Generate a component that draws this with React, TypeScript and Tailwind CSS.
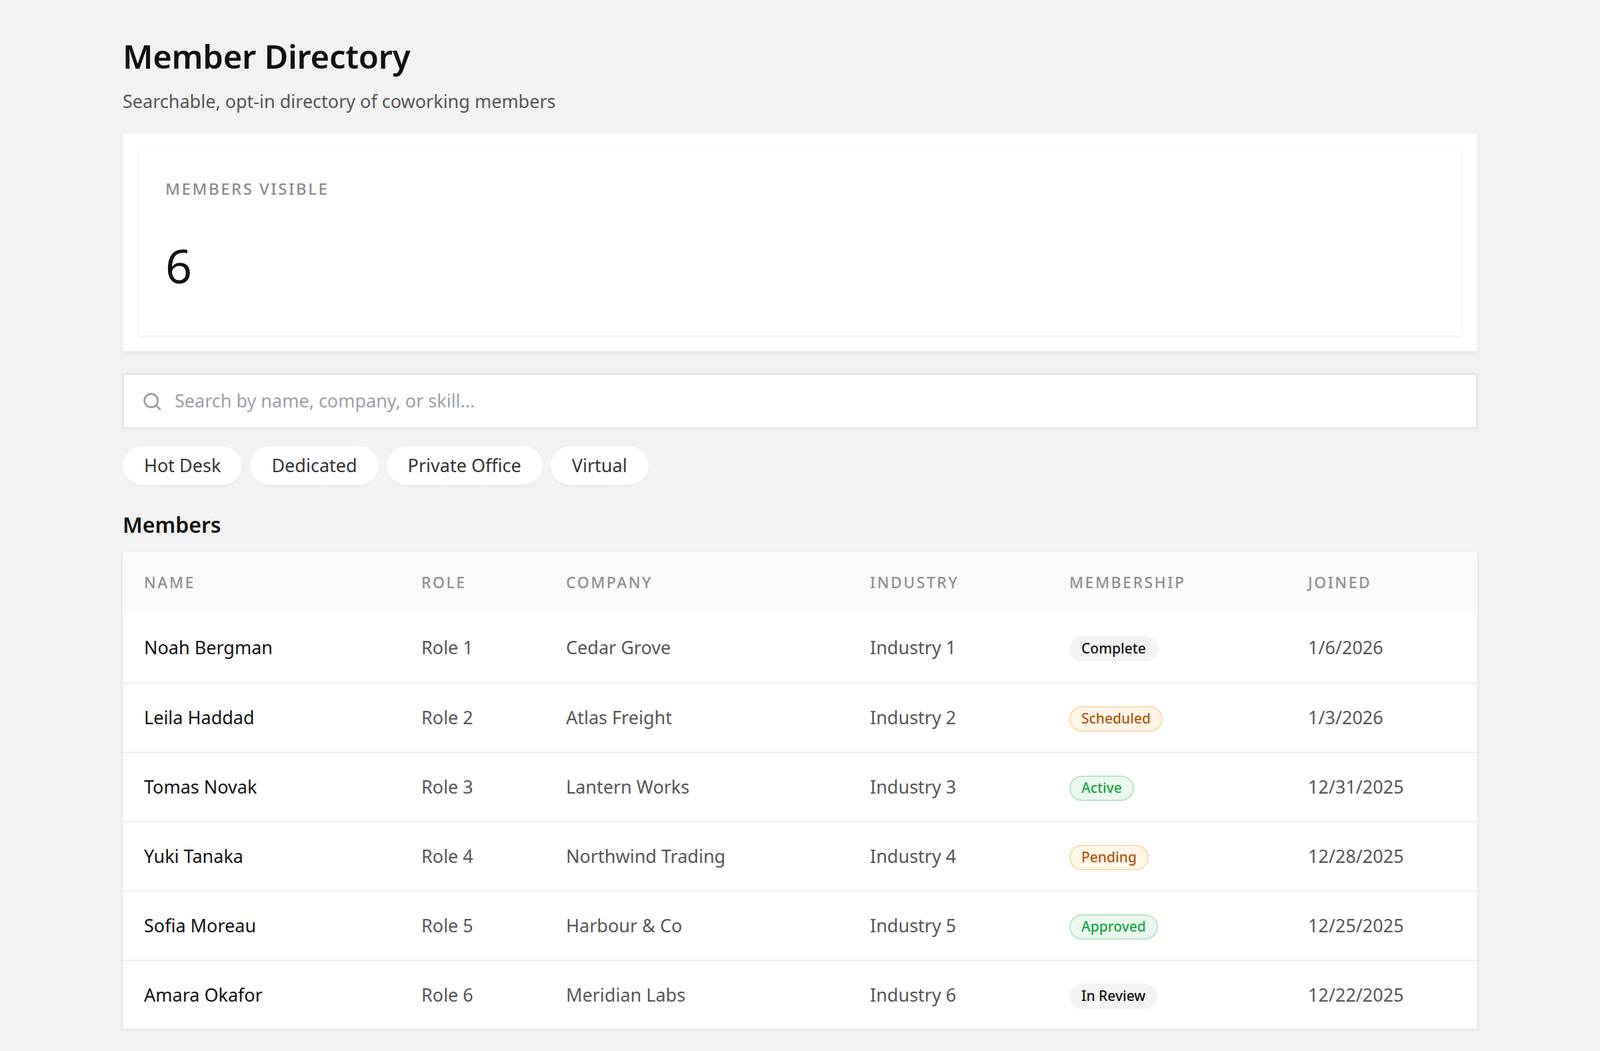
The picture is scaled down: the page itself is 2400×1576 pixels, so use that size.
import React from "react";

const rows = [
  ["Noah Bergman", "Role 1", "Cedar Grove", "Industry 1", "Complete", "1/6/2026"],
  ["Leila Haddad", "Role 2", "Atlas Freight", "Industry 2", "Scheduled", "1/3/2026"],
  ["Tomas Novak", "Role 3", "Lantern Works", "Industry 3", "Active", "12/31/2025"],
  ["Yuki Tanaka", "Role 4", "Northwind Trading", "Industry 4", "Pending", "12/28/2025"],
  ["Sofia Moreau", "Role 5", "Harbour & Co", "Industry 5", "Approved", "12/25/2025"],
  ["Amara Okafor", "Role 6", "Meridian Labs", "Industry 6", "In Review", "12/22/2025"],
];

const badge: Record<string, string> = {
  Complete: "bg-[#f3f3f3] border-[#f3f3f3] text-[#111]",
  "In Review": "bg-[#f3f3f3] border-[#f3f3f3] text-[#111]",
  Scheduled: "bg-[#fff6e9] border-[#fbdcae] text-[#b45309]",
  Pending: "bg-[#fff6e9] border-[#fbdcae] text-[#b45309]",
  Active: "bg-[#ecf8ef] border-[#b9e6c6] text-[#16a34a]",
  Approved: "bg-[#ecf8ef] border-[#b9e6c6] text-[#16a34a]",
};

const cols = "grid grid-cols-[416px_217px_456px_299px_358px_1fr] items-center px-[32px]";

export default function App() {
  return (
    <div className="min-h-[1576px] bg-[#f2f2f2] px-[184px] pt-[52px] pb-[40px] font-['Inter',sans-serif] text-[#111]">
      <h1 className="text-[49px] font-semibold leading-[64px] tracking-[-0.3px]">Member Directory</h1>
      <p className="mt-[18px] text-[27px] text-[#555] leading-[36px]">Searchable, opt-in directory of coworking members</p>

      <div className="mt-[30px] bg-white p-[24px] shadow-[0_1px_4px_rgba(0,0,0,0.1)]">
        <div className="h-[279px] bg-white px-[40px] pt-[44px] shadow-[0_1px_4px_rgba(0,0,0,0.12)]">
          <div className="text-[24px] font-medium tracking-[2.5px] text-[#8a8a8a] leading-[30px]">MEMBERS VISIBLE</div>
          <div className="mt-[60px] text-[70px] leading-[80px]">6</div>
        </div>
      </div>

      <div className="mt-[33px] flex h-[83px] items-center gap-[18px] border-2 border-[#e2e2e2] bg-white px-[26px]">
        <svg width="32" height="32" viewBox="0 0 24 24" fill="none" stroke="#9a9aa2" strokeWidth="2" strokeLinecap="round">
          <circle cx="11" cy="11" r="7.5" />
          <path d="M21 21l-4.3-4.3" />
        </svg>
        <span className="text-[27px] text-[#9aa0a8]">Search by name, company, or skill...</span>
      </div>

      <div className="mt-[26px] flex gap-[12px]">
        {["Hot Desk", "Dedicated", "Private Office", "Virtual"].map((c) => (
          <div key={c} className="flex h-[58px] items-center rounded-full bg-white px-[32px] text-[27px] text-[#333] shadow-[0_1px_3px_rgba(0,0,0,0.06)]">{c}</div>
        ))}
      </div>

      <h2 className="mt-[38px] text-[32px] font-semibold leading-[44px]">Members</h2>

      <div className="mt-[18px] bg-white shadow-[0_1px_4px_rgba(0,0,0,0.12)]">
        <div className={`${cols} h-[92px] bg-[#fafafa] text-[23px] font-medium tracking-[2.5px] text-[#8f8f8f]`}>
          {["NAME", "ROLE", "COMPANY", "INDUSTRY", "MEMBERSHIP", "JOINED"].map((h) => <div key={h}>{h}</div>)}
        </div>
        {rows.map((r, i) => (
          <div key={i} className={`${cols} h-[104px] text-[27px] text-[#555] ${i > 0 ? "border-t-2 border-[#efefef]" : ""}`}>
            <div className="text-[#111]">{r[0]}</div>
            <div>{r[1]}</div>
            <div>{r[2]}</div>
            <div>{r[3]}</div>
            <div>
              <span className={`inline-flex h-[38px] items-center rounded-full border-2 px-[16px] text-[21px] font-medium ${badge[r[4]]}`}>{r[4]}</span>
            </div>
            <div>{r[5]}</div>
          </div>
        ))}
      </div>
    </div>
  );
}
